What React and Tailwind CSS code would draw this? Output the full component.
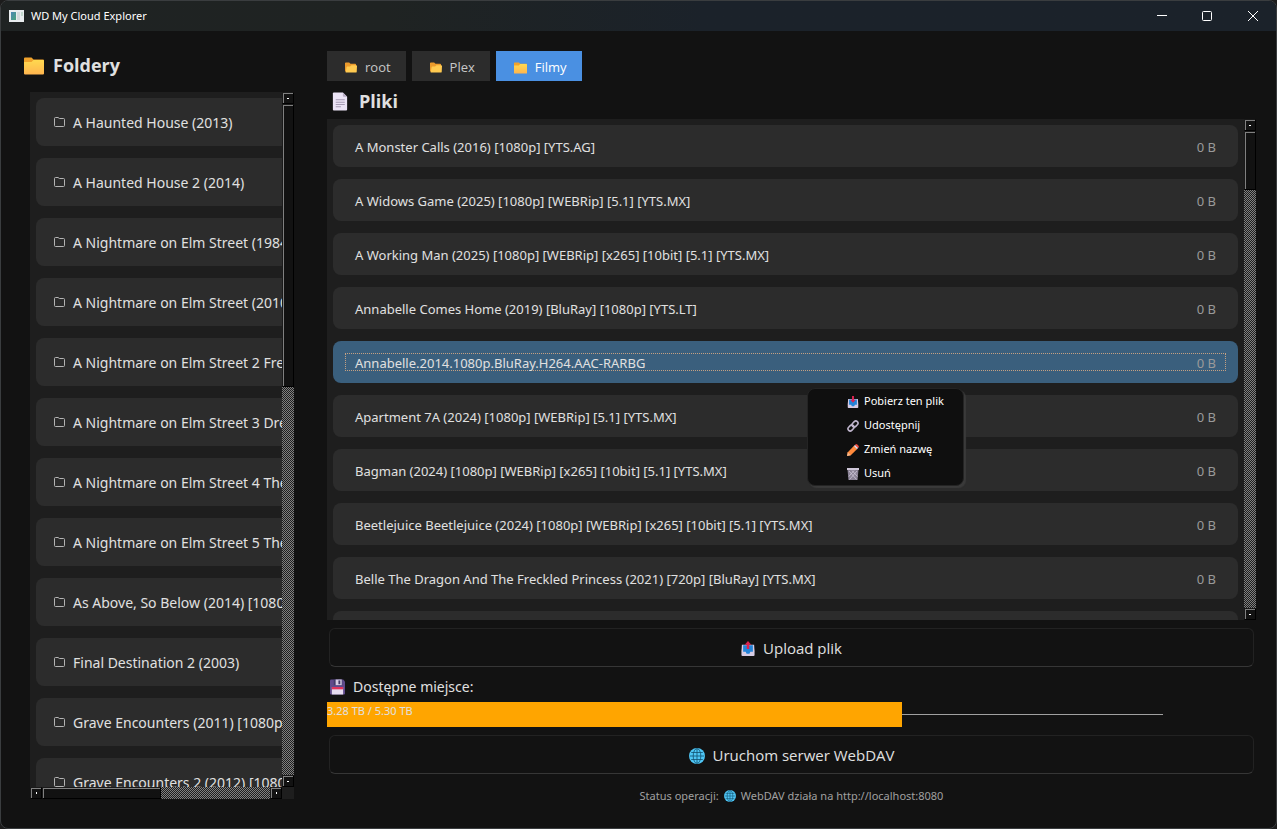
import React from "react";

const folders = [
  "A Haunted House (2013)",
  "A Haunted House 2 (2014)",
  "A Nightmare on Elm Street (1984)",
  "A Nightmare on Elm Street (2010)",
  "A Nightmare on Elm Street 2 Freddy's",
  "A Nightmare on Elm Street 3 Dream",
  "A Nightmare on Elm Street 4 The",
  "A Nightmare on Elm Street 5 The",
  "As Above, So Below (2014) [1080p]",
  "Final Destination 2 (2003)",
  "Grave Encounters (2011) [1080p]",
  "Grave Encounters 2 (2012) [1080p]",
];

const files = [
  { name: "A Monster Calls (2016) [1080p] [YTS.AG]", size: "0 B" },
  { name: "A Widows Game (2025) [1080p] [WEBRip] [5.1] [YTS.MX]", size: "0 B" },
  { name: "A Working Man (2025) [1080p] [WEBRip] [x265] [10bit] [5.1] [YTS.MX]", size: "0 B" },
  { name: "Annabelle Comes Home (2019) [BluRay] [1080p] [YTS.LT]", size: "0 B" },
  { name: "Annabelle.2014.1080p.BluRay.H264.AAC-RARBG", size: "0 B", selected: true },
  { name: "Apartment 7A (2024) [1080p] [WEBRip] [5.1] [YTS.MX]", size: "0 B" },
  { name: "Bagman (2024) [1080p] [WEBRip] [x265] [10bit] [5.1] [YTS.MX]", size: "0 B" },
  { name: "Beetlejuice Beetlejuice (2024) [1080p] [WEBRip] [x265] [10bit] [5.1] [YTS.MX]", size: "0 B" },
  { name: "Belle The Dragon And The Freckled Princess (2021) [720p] [BluRay] [YTS.MX]", size: "0 B" },
];

function FolderIcon({ className }) {
  return (
    <svg className={className} viewBox="0 0 20 18" aria-hidden="true">
      <defs>
        <linearGradient id="folderFace" x1="0" y1="0" x2="0" y2="1">
          <stop offset="0" stopColor="#ffd94f" />
          <stop offset="1" stopColor="#ffb54f" />
        </linearGradient>
      </defs>
      <path d="M0 1.500Q0 .5 1 .5H7.500L9.500 2.500H19Q20 2.500 20 3.500V8H0Z" fill="#f0a22c" />
      <path d="M0 5H7.500L9.500 3H19Q20 3 20 4V16.500Q20 17.500 19 17.500H1Q0 17.500 0 16.500Z" fill="url(#folderFace)" />
    </svg>
  );
}

function OpenFolderIcon({ className }) {
  return (
    <svg className={className} viewBox="0 0 13 11" aria-hidden="true">
      <path d="M0 1Q0 0 1 0H4.500L6 1.500H11Q12 1.500 12 2.500V10H1Q0 10 0 9Z" fill="#eb9a2c" />
      <path d="M2.500 4.500H5.500L7 3H12Q13 3 13 4L12.700 10Q12.600 11 11.700 11H1Q.5 11 .8 10L1.700 5.200Q1.900 4.500 2.500 4.500Z" fill="#ffca50" />
    </svg>
  );
}

function FolderOutlineIcon({ className }) {
  return (
    <svg className={className} viewBox="0 0 11 10" fill="none" stroke="#b4b4b4" aria-hidden="true">
      <path d="M.5 8.500V1.500Q.5.5 1.500.5H4L5.500 1.500H9.500Q10.500 1.500 10.500 2.500V8.500Q10.500 9.500 9.500 9.500H1.500Q.5 9.500.5 8.500Z" />
    </svg>
  );
}

function PageIcon({ className }) {
  return (
    <svg className={className} viewBox="0 0 16 20" aria-hidden="true">
      <path d="M1.500.5H11L15.500 5V18.500Q15.500 19.500 14.500 19.500H1.500Q.5 19.500.5 18.500V1.500Q.5.5 1.500.5Z" fill="#ebe3f5" />
      <path d="M11 .5L15.500 5H12Q11 5 11 4Z" fill="#b8adc4" />
      <path d="M3.500 8.200H13M3.500 10.700H13M3.500 13.200H13M3.500 15.500H9" stroke="#a69bb3" strokeWidth="1.100" />
    </svg>
  );
}

function FloppyIcon({ className }) {
  return (
    <svg className={className} viewBox="0 0 16 16" aria-hidden="true">
      <path d="M1 0H14L16 2V15Q16 16 15 16H1Q0 16 0 15V1Q0 0 1 0Z" fill="#5f4a8b" />
      <rect x="4" y="0" width="9" height="6" fill="#433b6b" />
      <rect x="6" y="0" width="6.500" height="6" fill="#d5cbe2" />
      <rect x="9" y="1" width="2" height="4" fill="#433b6b" />
      <rect x="2" y="8" width="12" height="8" fill="#e6dcf0" />
      <rect x="2" y="8" width="12" height="2.500" fill="#e0355c" />
    </svg>
  );
}

function GlobeIcon({ className }) {
  return (
    <svg className={className} viewBox="0 0 16 16" aria-hidden="true">
      <circle cx="8" cy="8" r="8" fill="#4fc6f5" />
      <g fill="none" stroke="#12506e" strokeWidth="0.800">
        <path d="M8 .8V15.200M.8 8H15.200M2.200 4.500H13.800M2.200 11.500H13.800" />
        <ellipse cx="8" cy="8" rx="3.800" ry="7.400" />
      </g>
    </svg>
  );
}

function TrayIcon({ className, down }) {
  return (
    <svg className={className} viewBox="0 0 14 16" aria-hidden="true">
      <path d="M.5 4H13.500L14 11V15Q14 16 13 16H1Q0 16 0 15V11Z" fill="#d6cbe4" />
      <path d="M1.800 4.500H12.200V11.500H9.500L8.500 13.500H5.500L4.500 11.500H1.800Z" fill="#2383d8" />
      {down ? (
        <path d="M5.700 0H8.300V5H10.500L7 9L3.500 5H5.700Z" fill="#dc2350" />
      ) : (
        <path d="M7 0L10.500 4H8.300V8.500H5.700V4H3.500Z" fill="#dc2350" />
      )}
    </svg>
  );
}

function LinkIcon({ className }) {
  return (
    <svg className={className} viewBox="0 0 12 12" fill="none" stroke="#bfb5cc" strokeWidth="1.600" aria-hidden="true">
      <rect x="-3.300" y="-2.200" width="6.600" height="4.400" rx="2.200" transform="translate(8 4) rotate(-45)" />
      <rect x="-3.300" y="-2.200" width="6.600" height="4.400" rx="2.200" transform="translate(4 8) rotate(-45)" />
    </svg>
  );
}

function CrayonIcon({ className }) {
  return (
    <svg className={className} viewBox="0 0 12 12" aria-hidden="true">
      <path d="M0 12L.8 8.200L7 1.800L10.200 5L3.800 11.200Z" fill="#ff8a3c" />
      <path d="M0 12L.8 8.200L3.800 11.200Z" fill="#f7b98a" />
      <path d="M6.800 2L8.200.8L11.200 3.800L10 5.200Z" fill="#e4dced" />
      <path d="M8 .9L8.500.5Q9.400-.3 10.300.5L11.500 1.700Q12.300 2.600 11.500 3.500L11.100 4Z" fill="#f04a3e" />
    </svg>
  );
}

function TrashIcon({ className }) {
  return (
    <svg className={className} viewBox="0 0 12 12" aria-hidden="true">
      <path d="M.5 1.500H11.500L10.500 12H1.500Z" fill="#8b8396" />
      <path d="M2 3L9.500 11.500M5 2.500L10.500 8.500M10 3L2.500 11.500M7 2.500L1.800 8.500" stroke="#d9d1e2" strokeWidth="0.700" />
      <rect x="0" y="0" width="12" height="2" fill="#cfc7d9" />
    </svg>
  );
}

function AppIcon({ className }) {
  return (
    <svg className={className} viewBox="0 0 15 12" aria-hidden="true">
      <defs>
        <linearGradient id="appPane" x1="0" y1="0" x2="1" y2="1">
          <stop offset="0" stopColor="#4b86b4" />
          <stop offset="1" stopColor="#4aa37a" />
        </linearGradient>
      </defs>
      <rect width="15" height="12" fill="#e9edef" />
      <rect x="2" y="2" width="5" height="8" fill="url(#appPane)" />
      <rect x="8" y="2" width="3" height="8" fill="#d3d9db" />
      <rect x="12" y="2" width="2" height="4" fill="#c3d9ce" />
    </svg>
  );
}

const relief =
  "shrink-0 border border-t-[#1a1a1a] border-l-[#1a1a1a] border-r-black border-b-black bg-[#121212] shadow-[inset_1px_1px_0_#808080]";
const dither = "bg-[repeating-conic-gradient(#808080_0_25%,#1e1e1e_0_50%)] bg-[length:2px_2px]";

function ScrollButton({ label, horizontal }) {
  return (
    <button type="button" aria-label={label} className={`flex size-3 items-center justify-center ${relief}`}>
      <span className={horizontal ? "h-[2px] w-px bg-white" : "h-px w-[2px] bg-white"} />
    </button>
  );
}

function VerticalScrollbar({ thumb }) {
  return (
    <div className="flex w-3 shrink-0 flex-col">
      <ScrollButton label="W górę" />
      <div className={`min-h-0 flex-1 ${dither}`}>
        <div className={relief} style={{ height: `${thumb}%` }} />
      </div>
      <ScrollButton label="W dół" />
    </div>
  );
}

function HorizontalScrollbar({ thumb }) {
  return (
    <div className="flex h-3 min-w-0 flex-1">
      <ScrollButton label="W lewo" horizontal />
      <div className={`min-w-0 flex-1 ${dither}`}>
        <div className={`h-full ${relief}`} style={{ width: `${thumb}%` }} />
      </div>
      <ScrollButton label="W prawo" horizontal />
    </div>
  );
}

function TitleBar() {
  return (
    <header className="flex h-[30px] shrink-0 items-center bg-linear-to-r from-[#1f2323] via-[#1f2322] via-30% to-[#1b222a] to-55% pl-2">
      <AppIcon className="h-3 w-[15px]" />
      <h1 className="ml-[7px] flex-1 text-[11px] text-white">WD My Cloud Explorer</h1>
      <div className="flex h-full">
        <button type="button" aria-label="Minimalizuj" className="flex w-[45px] items-center justify-center">
          <svg className="size-[10px]" viewBox="0 0 10 10" stroke="#fff"><path d="M0 4.500H10" /></svg>
        </button>
        <button type="button" aria-label="Maksymalizuj" className="flex w-[45px] items-center justify-center">
          <svg className="size-[10px]" viewBox="0 0 10 10" fill="none" stroke="#fff"><rect x=".5" y=".5" width="9" height="9" rx="1" /></svg>
        </button>
        <button type="button" aria-label="Zamknij" className="flex w-[47px] items-center justify-center">
          <svg className="size-[10px]" viewBox="0 0 10 10" stroke="#fff"><path d="M0 0L10 10M10 0L0 10" /></svg>
        </button>
      </div>
    </header>
  );
}

const openSans = "font-['Open_Sans','Noto_Sans',sans-serif]";

function FolderPanel() {
  return (
    <aside className="flex w-[293px] shrink-0 flex-col pt-[14px] pb-[29px]">
      <h2 className={`flex h-[47px] shrink-0 items-center gap-[9px] pb-[6px] pl-[23px] text-[18px] font-bold ${openSans}`}>
        <FolderIcon className="h-[18px] w-5" />
        Foldery
      </h2>
      <div className="ml-[29px] flex min-h-0 flex-1 flex-col bg-[#1e1e1e]">
        <div className="flex min-h-0 flex-1">
          <div className="min-w-0 flex-1 overflow-scroll [scrollbar-width:none]">
            <ul className="flex w-max min-w-full flex-col gap-3 p-[6px]">
              {folders.map((name) => (
                <li key={name}>
                  <button
                    type="button"
                    className="flex h-12 w-full items-center gap-2 rounded-lg bg-[#2c2c2c] px-[18px] text-[14px] whitespace-nowrap"
                  >
                    <FolderOutlineIcon className="h-[10px] w-[11px]" />
                    {name}
                  </button>
                </li>
              ))}
            </ul>
          </div>
          <VerticalScrollbar thumb={42.2} />
        </div>
        <div className="flex">
          <HorizontalScrollbar thumb={52.2} />
          <div className="size-3" />
        </div>
      </div>
    </aside>
  );
}

function Breadcrumbs() {
  const crumb = "flex items-center gap-2 pt-[3px] pr-[15px] pl-[18px] text-[13px]";
  return (
    <nav aria-label="Ścieżka" className={`flex h-[30px] shrink-0 gap-[6px] ${openSans}`}>
      <button type="button" className={`${crumb} bg-[#2c2c2c] text-[#c8c8c8]`}>
        <OpenFolderIcon className="h-[11px] w-3" />
        root
      </button>
      <button type="button" className={`${crumb} bg-[#2c2c2c] text-[#c8c8c8]`}>
        <OpenFolderIcon className="h-[11px] w-3" />
        Plex
      </button>
      <button type="button" aria-current="page" className={`${crumb} bg-[#4a90e2] text-white`}>
        <FolderIcon className="h-3 w-[13px]" />
        Filmy
      </button>
    </nav>
  );
}

function FileRow({ name, size, selected }) {
  return (
    <li>
      <button
        type="button"
        className={`flex h-[42px] w-full rounded-lg p-3 ${selected ? "bg-[#3a5f7d]" : "bg-[#2c2c2c]"}`}
      >
        <span
          className={`flex h-full flex-1 items-center justify-between border border-dotted px-[9px] pt-[3px] text-[13px] ${
            selected ? "border-[#c5a082]" : "border-transparent"
          }`}
        >
          <span>{name}</span>
          <span className="text-[#9a9a9a]">{size}</span>
        </span>
      </button>
    </li>
  );
}

function ContextMenu() {
  const items = [
    { label: "Pobierz ten plik", icon: <TrayIcon down className="size-3" /> },
    { label: "Udostępnij", icon: <LinkIcon className="size-3" /> },
    { label: "Zmień nazwę", icon: <CrayonIcon className="size-3" /> },
    { label: "Usuń", icon: <TrashIcon className="size-3" /> },
  ];
  return (
    <div
      role="menu"
      className="absolute top-[269px] left-[480px] w-[157px] rounded-lg border border-[#242424] bg-[#0f0f0f] shadow-[2px_2px_1px_#3a3a3a]"
    >
      {items.map(({ label, icon }) => (
        <button
          key={label}
          type="button"
          role="menuitem"
          className="flex h-6 w-full items-center gap-[5px] pt-px pl-[39px] text-[11px] text-white"
        >
          {icon}
          {label}
        </button>
      ))}
    </div>
  );
}

const wideButton =
  `mx-[2px] flex h-[39px] shrink-0 items-center justify-center gap-2 rounded-md border border-[#222] border-b-[#363636] pt-[2px] text-[15px] ${openSans}`;

function FilePanel() {
  return (
    <main className="flex min-w-0 flex-1 flex-col pt-5 pb-[10px]">
      <Breadcrumbs />
      <h2 className={`flex h-[38px] shrink-0 items-center gap-[11px] pt-[3px] pl-[5px] text-[18px] font-bold ${openSans}`}>
        <PageIcon className="h-[19px] w-4" />
        Pliki
      </h2>
      <div className="relative flex min-h-0 flex-1 bg-[#1e1e1e]">
        <ul className="flex min-w-0 flex-1 flex-col gap-3 overflow-y-scroll p-[6px] [scrollbar-width:none]">
          {files.map((file) => (
            <FileRow key={file.name} {...file} />
          ))}
          <li className="h-[42px] shrink-0 rounded-lg bg-[#2c2c2c]" />
        </ul>
        <VerticalScrollbar thumb={12.4} />
        <ContextMenu />
      </div>
      <button type="button" className={`mt-2 ${wideButton}`}>
        <TrayIcon className="h-[15px] w-[14px]" />
        Upload plik
      </button>
      <p id="space-label" className="flex h-[35px] shrink-0 items-center gap-2 pt-1 pl-[3px] text-[14px]">
        <FloppyIcon className="h-4 w-[15px]" />
        Dostępne miejsce:
      </p>
      <div
        role="progressbar"
        aria-labelledby="space-label"
        aria-valuemin={0}
        aria-valuemax={5.3}
        aria-valuenow={3.28}
        className="flex h-[25px] w-[90%] shrink-0 items-center"
      >
        <div className="h-full bg-[#ffa500] text-[11px] leading-[18px]" style={{ width: `${(3.28 / 5.3 / 0.9) * 100}%` }}>
          3.28 TB / 5.30 TB
        </div>
        <div className="h-px flex-1 bg-[#a0a0a0]" />
      </div>
      <button type="button" className={`mt-2 ${wideButton}`}>
        <GlobeIcon className="size-4" />
        Uruchom serwer WebDAV
      </button>
      <p className="flex h-11 shrink-0 items-center justify-center gap-[5px] text-[11px] text-[#a0a0a0]">
        Status operacji:
        <GlobeIcon className="size-3" />
        WebDAV działa na http://localhost:8080
      </p>
    </main>
  );
}

export default function App() {
  return (
    <div className="h-screen bg-[#1c1c1c] font-['Noto_Sans','Open_Sans',sans-serif] text-[#e0e0e0]">
      <div className="flex h-full flex-col overflow-hidden rounded-lg border border-[#3a3d3f] bg-[#121212]">
        <TitleBar />
        <div className="flex min-h-0 flex-1 gap-[33px] pr-5">
          <FolderPanel />
          <FilePanel />
        </div>
      </div>
    </div>
  );
}
